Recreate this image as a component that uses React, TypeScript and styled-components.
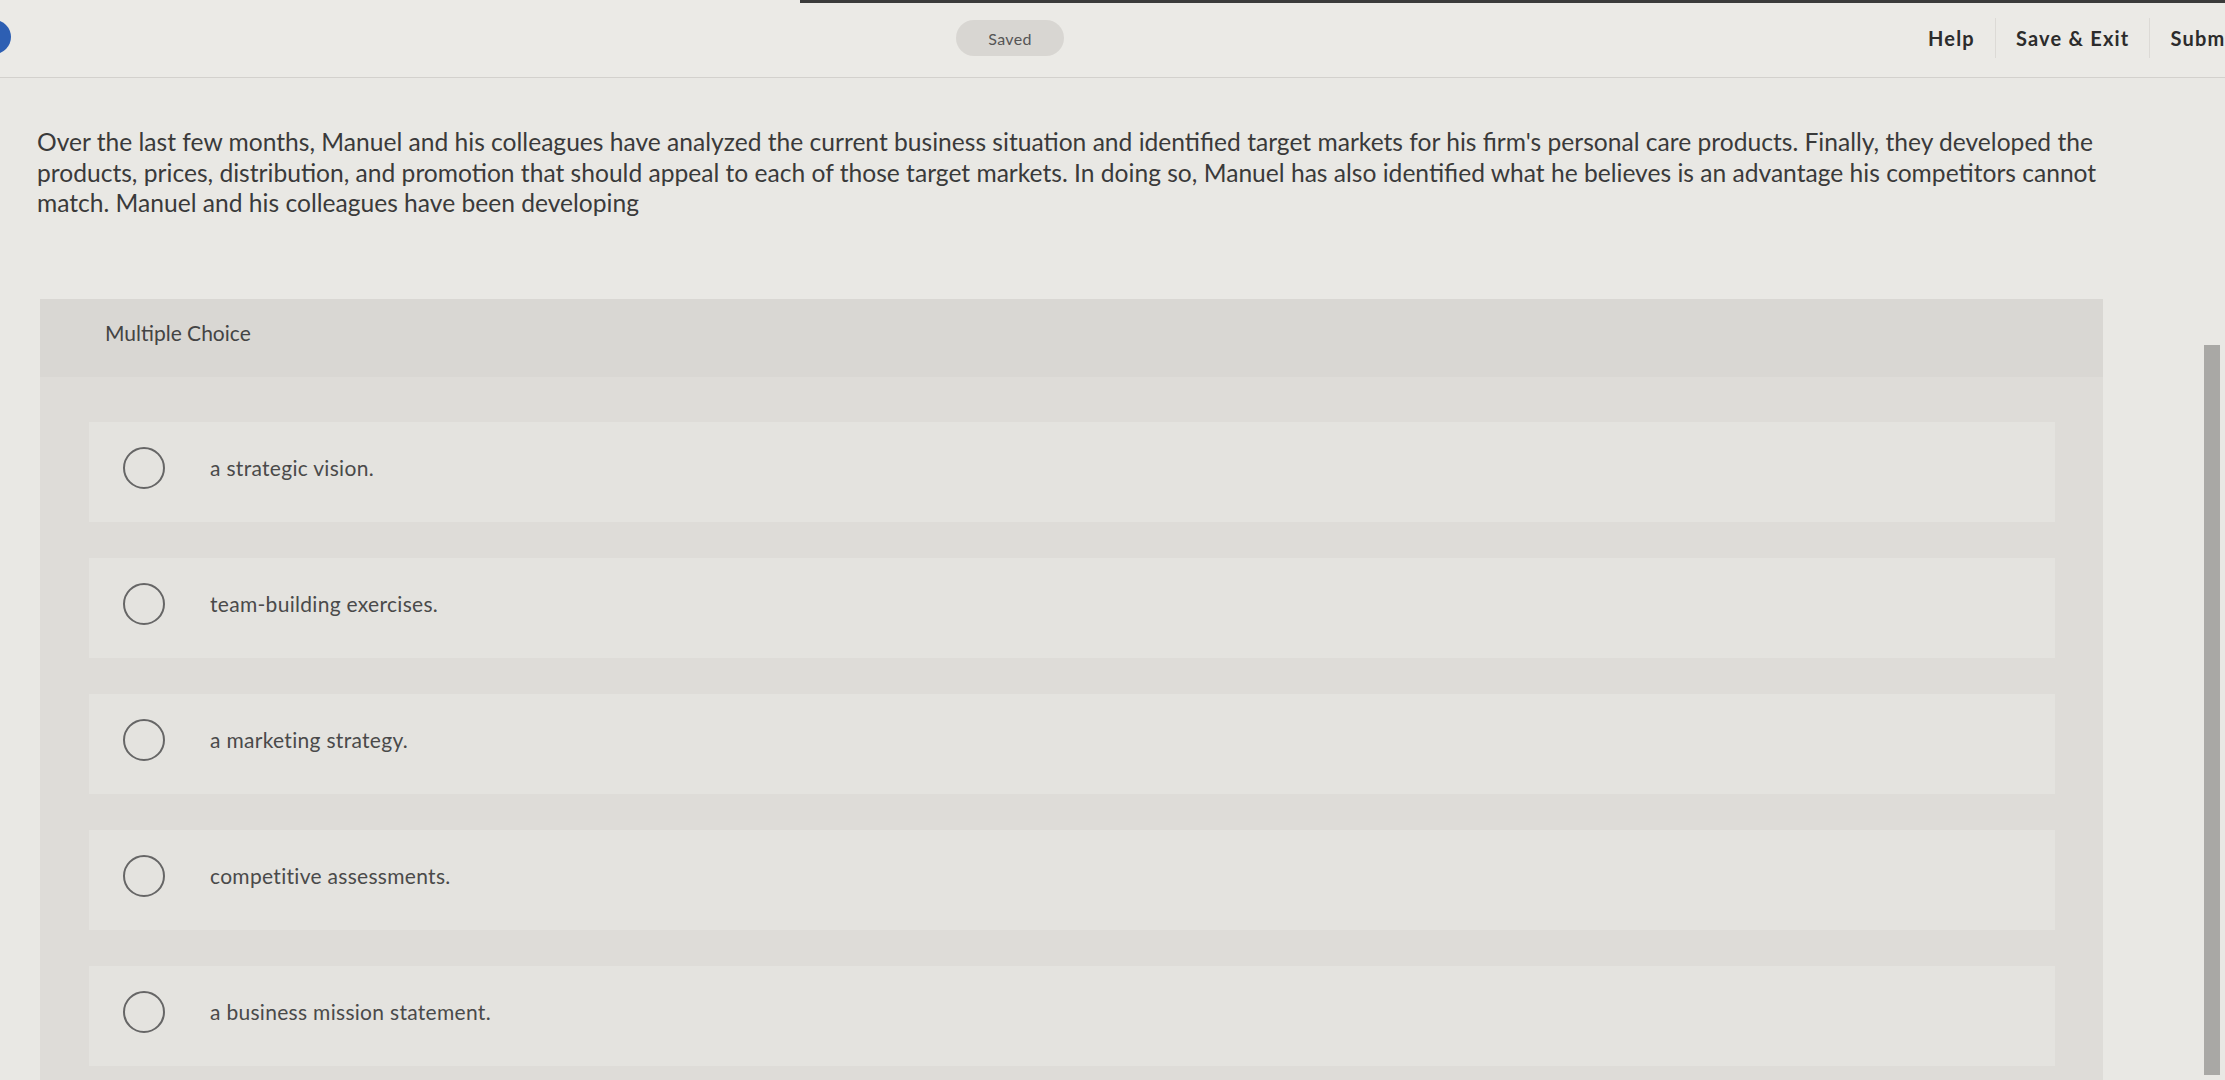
import styled, { createGlobalStyle } from 'styled-components';

const GlobalStyle = createGlobalStyle`
  html, body {
    margin: 0;
    padding: 0;
    background: #e8e7e3;
  }
  body {
    font-family: Lato, "Liberation Sans", Arial, sans-serif;
    color: #333;
  }
`;

const Page = styled.div`
  position: relative;
  width: 2225px;
  height: 1080px;
  overflow: hidden;
  background: #e9e8e4;
`;

const TopBar = styled.header`
  display: flex;
  align-items: center;
  height: 78px;
  padding-top: 3px;
  border-bottom: 1px solid #d3d1cd;
  box-sizing: border-box;
  background: linear-gradient(to right, transparent 800px, #3b3b3b 800px) top / 100% 3px no-repeat, #ebeae6;
`;

const Dot = styled.span`
  flex-shrink: 0;
  width: 34px;
  height: 34px;
  margin-left: -23px;
  margin-top: -6px;
  border-radius: 50%;
  background: #2d5fb3;
`;

const SavedPill = styled.span`
  flex-shrink: 0;
  margin-left: 945px;
  width: 108px;
  height: 36px;
  margin-top: -4px;
  border-radius: 18px;
  background: #d8d6d2;
  color: #555;
  font-size: 16px;
  letter-spacing: 0.3px;
  display: flex;
  align-items: center;
  justify-content: center;
`;

const Nav = styled.nav`
  flex-shrink: 0;
  display: flex;
  align-items: center;
  margin-left: 843px;
  margin-top: -4px;
`;

const NavItem = styled.span<{ $divider?: boolean }>`
  padding: 0 20px;
  font-size: 20px;
  font-weight: 700;
  letter-spacing: 1.2px;
  color: #2c2c2c;
  white-space: nowrap;
  line-height: 40px;
  border-left: ${p => (p.$divider ? '1px solid #dcdad6' : '1px solid transparent')};
`;

const Question = styled.p`
  margin: 0;
  padding: 49px 0 0 37px;
  font-size: 24.6px;
  line-height: 30.5px;
  color: #3a3a3a;
  white-space: nowrap;
`;

const Panel = styled.section`
  margin: 80px 0 0 40px;
  width: 2063px;
  background: #dedcd8;
  padding-bottom: 40px;
`;

const PanelHeader = styled.div`
  height: 78px;
  display: flex;
  align-items: center;
  padding-left: 65px;
  padding-bottom: 10px;
  box-sizing: border-box;
  background: #d9d7d3;
  font-size: 21px;
  color: #444;
`;

const Options = styled.div`
  display: flex;
  flex-direction: column;
  gap: 36px;
  padding: 45px 48px 0 49px;
`;

const OptionRow = styled.label`
  display: flex;
  align-items: center;
  gap: 45px;
  height: 100px;
  padding-left: 34px;
  background: #e4e3df;
  cursor: pointer;
`;

const Radio = styled.span`
  flex-shrink: 0;
  width: 38px;
  height: 38px;
  border: 2px solid #666;
  border-radius: 50%;
  margin-top: -8px;
`;

const OptionText = styled.span`
  font-size: 21px;
  letter-spacing: 0.3px;
  color: #4a4a4a;
  margin-top: -8px;
`;

const ScrollThumb = styled.div`
  position: absolute;
  right: 5px;
  top: 345px;
  width: 16px;
  height: 730px;
  background: #a9a8a5;
`;

const options = [
  'a strategic vision.',
  'team-building exercises.',
  'a marketing strategy.',
  'competitive assessments.',
  'a business mission statement.',
];

export default function App() {
  return (
    <Page>
      <GlobalStyle />
      <TopBar>
        <Dot />
        <SavedPill>Saved</SavedPill>
        <Nav>
          <NavItem>Help</NavItem>
          <NavItem $divider>Save &amp; Exit</NavItem>
          <NavItem $divider>Submit</NavItem>
        </Nav>
      </TopBar>

      <Question>
        Over the last few months, Manuel and his colleagues have analyzed the current business situation and identified target markets for his firm's personal care products. Finally, they developed the
        <br />
        products, prices, distribution, and promotion that should appeal to each of those target markets. In doing so, Manuel has also identified what he believes is an advantage his competitors cannot
        <br />
        match. Manuel and his colleagues have been developing
      </Question>

      <Panel>
        <PanelHeader>Multiple Choice</PanelHeader>
        <Options>
          {options.map(text => (
            <OptionRow key={text}>
              <Radio />
              <OptionText>{text}</OptionText>
            </OptionRow>
          ))}
        </Options>
      </Panel>

      <ScrollThumb />
    </Page>
  );
}
